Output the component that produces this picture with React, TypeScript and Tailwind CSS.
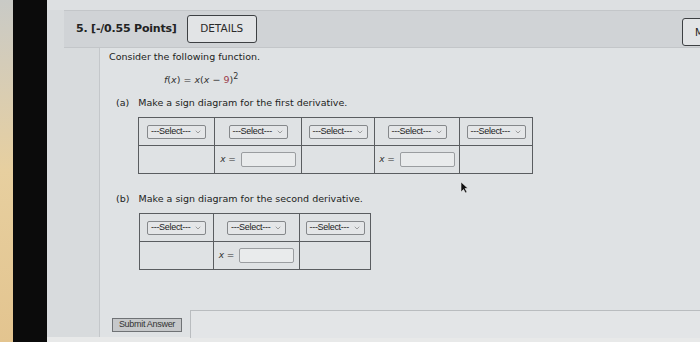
import { ChevronDown } from "lucide-react";

function Select() {
  return (
    <div className="inline-flex items-center h-[14px] w-[59px] px-[3px] border border-[#85888b] rounded-[2px] bg-[#e4e6e8] text-[9px] leading-none text-[#222] font-['Liberation_Sans',Arial,sans-serif]">
      <span className="flex-1 tracking-[-0.3px]">---Select---</span>
      <ChevronDown size={8} strokeWidth={1.5} className="text-[#555]" />
    </div>
  );
}

function XInput() {
  return (
    <div className="flex items-center gap-[5px]">
      <span className="text-[9px] text-[#333]">
        <i>x</i> =
      </span>
      <div className="h-[15px] w-[55px] border border-[#9a9da0] rounded-[2px] bg-[#e9ebec]" />
    </div>
  );
}

function SignTable({ cols }: { cols: { w: number; input: boolean }[] }) {
  return (
    <div className="flex border border-[#5a5d60] w-fit">
      {cols.map((c, i) => (
        <div
          key={i}
          style={{ width: c.w }}
          className={i > 0 ? "border-l border-[#5a5d60]" : ""}
        >
          <div className="h-[28px] flex items-center justify-center border-b border-[#5a5d60]">
            <Select />
          </div>
          <div className="h-[27px] flex items-center justify-center">
            {c.input && <XInput />}
          </div>
        </div>
      ))}
    </div>
  );
}

export default function App() {
  return (
    <div className="w-[700px] h-[342px] overflow-hidden flex font-['DejaVu_Sans',Verdana,sans-serif] text-[#222]">
      {/* desk edge + bezel */}
      <div className="w-[13px] shrink-0 bg-gradient-to-b from-[#c9cac6] via-[#e7cf9f] to-[#e3c48f]" />
      <div className="w-[34px] shrink-0 bg-[#0b0b0b]" />

      {/* screen */}
      <div className="flex-1 bg-[#d8dbdd] flex flex-col">
        <div className="h-[10px] shrink-0 bg-[#dde0e2]" />

        {/* header band */}
        <div className="ml-[17px] h-[38px] shrink-0 bg-[#d0d3d6] border-y border-[#c3c6c9] flex items-center pl-[12px]">
          <span className="text-[11px] font-bold tracking-[-0.2px]">5. [-/0.55 Points]</span>
          <div className="ml-[10px] h-[28px] w-[70px] border-[1.5px] border-[#3d4043] rounded-[3px] bg-[#e2e4e6] flex items-center justify-center text-[10.5px] text-[#2a2a2a]">
            DETAILS
          </div>
          <div className="ml-auto mr-[-12px] h-[28px] w-[30px] border-[1.5px] border-[#3d4043] rounded-[3px] bg-[#e2e4e6] flex items-center pl-[12px] text-[10px] mt-[6px]">
            M
          </div>
        </div>

        {/* body */}
        <div className="flex-1 flex min-h-0">
          <div className="w-[52px] shrink-0" />
          <div className="flex-1 flex flex-col bg-[#dfe2e4] border-l border-[#c4c7ca] pl-[9px] pt-[2px] relative">
            <p className="text-[9.5px] leading-[14px]">Consider the following function.</p>
            <p className="mt-[9px] ml-[55px] text-[9.5px] leading-[14px] text-[#333]">
              <i>f</i>(<i>x</i>) = <i>x</i>(<i>x</i> − <span className="text-[#9b3b4a]">9</span>)<sup className="text-[8px]">2</sup>
            </p>
            <p className="mt-[9px] ml-[7px] text-[9.5px] leading-[14px]">
              (a)&nbsp;&nbsp; Make a sign diagram for the first derivative.
            </p>
            <div className="mt-[7px] ml-[29px]">
              <SignTable
                cols={[
                  { w: 75, input: false },
                  { w: 87, input: true },
                  { w: 73, input: false },
                  { w: 85, input: true },
                  { w: 73, input: false },
                ]}
              />
            </div>
            <p className="mt-[18px] ml-[7px] text-[9.5px] leading-[14px]">
              (b)&nbsp;&nbsp; Make a sign diagram for the second derivative.
            </p>
            <div className="mt-[7px] ml-[30px]">
              <SignTable
                cols={[
                  { w: 73, input: false },
                  { w: 86, input: true },
                  { w: 71, input: false },
                ]}
              />
            </div>

            <div className="flex mt-[40px] items-end">
              <div className="ml-[3px] mb-[6px] h-[14px] w-[70px] bg-[#c6c8ca] border border-[#6f7275] flex items-center justify-center text-[9px] font-['Liberation_Sans',Arial,sans-serif] tracking-[-0.3px] text-[#333]">
                Submit Answer
              </div>
              <div className="ml-[8px] flex-1 h-[28px] border-t border-l border-[#b9bcbf] bg-[#e3e5e7]" />
            </div>

            {/* mouse cursor */}
            <svg
              className="absolute left-[360px] top-[133px]"
              width="9"
              height="13"
              viewBox="0 0 9 13"
            >
              <path d="M1 1 L1 11 L3.5 8.5 L5.5 12 L7 11 L5 7.5 L8 7.5 Z" fill="#111" stroke="#eee" strokeWidth="0.6" />
            </svg>
          </div>
        </div>
        <div className="h-[5px] shrink-0 bg-[#e8e9e9]" />
      </div>
    </div>
  );
}
